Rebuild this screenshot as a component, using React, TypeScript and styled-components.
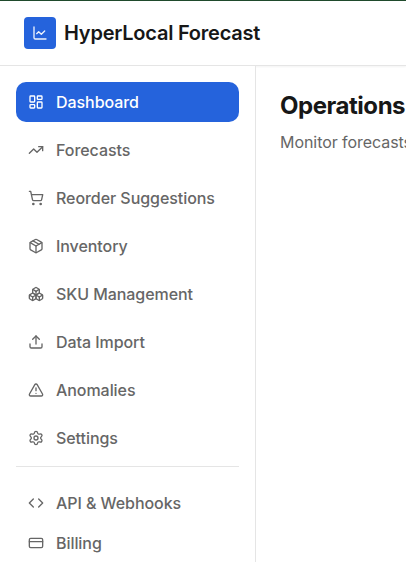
import React from "react";
import styled, { createGlobalStyle } from "styled-components";
import {
  LayoutDashboard, TrendingUp, ShoppingCart, Package, Boxes, Upload,
  TriangleAlert, Settings, Code, CreditCard, ChartLine, type LucideIcon,
} from "lucide-react";

const GlobalStyle = createGlobalStyle`
  *, *::before, *::after { box-sizing: border-box; }
  body { margin: 0; overflow: hidden; background: #fff; font-family: Inter, sans-serif; }
`;

const Page = styled.div`
  display: flex;
  flex-direction: column;
  height: 562px;
  overflow: hidden;
  border-top: 1px solid #1f4a2c;
`;

const Header = styled.header`
  display: flex;
  flex: none;
  align-items: center;
  gap: 8px;
  height: 65px;
  padding: 0 24px;
  border-bottom: 1px solid #e5e5e5;
  box-shadow: 0 1px 2px rgba(0, 0, 0, 0.05);
`;

const Logo = styled.div`
  display: grid;
  place-items: center;
  width: 32px;
  height: 32px;
  border-radius: 4px;
  background: #2563dc;
  color: rgba(255, 255, 255, 0.92);
`;

const Brand = styled.span`
  color: #171717;
  font-size: 20px;
  font-weight: 600;
  line-height: 28px;
  letter-spacing: -0.23px;
  white-space: nowrap;
`;

const Body = styled.div`
  display: flex;
  flex: 1;
  min-height: 0;
`;

const Sidebar = styled.aside`
  flex: none;
  width: 256px;
  padding: 16px;
  border-right: 1px solid #e5e5e5;
  background: #fff;
`;

const Nav = styled.nav<{ $gap: number }>`
  display: flex;
  flex-direction: column;
  gap: ${(p) => p.$gap}px;
`;

const NavItem = styled.a<{ $active?: boolean }>`
  display: flex;
  align-items: center;
  gap: 12px;
  height: 40px;
  padding: 0 12px;
  border-radius: 10px;
  background: ${(p) => (p.$active ? "#2563dc" : "transparent")};
  color: ${(p) => (p.$active ? "#fff" : "#666")};
  font-size: 16px;
  font-weight: 500;
  line-height: 24px;
  letter-spacing: -0.06px;
  white-space: nowrap;
`;

const Divider = styled.hr`
  height: 1px;
  margin: 8px 0 16px;
  border: 0;
  background: #e5e5e5;
`;

const Main = styled.main`
  flex: 1;
  min-width: 0;
  padding: 24px 0 24px 24px;
  white-space: nowrap;
`;

const Title = styled.h1`
  margin: 0;
  color: #171717;
  font-size: 24px;
  font-weight: 700;
  line-height: 32px;
  letter-spacing: -0.46px;
`;

const Subtitle = styled.p`
  margin: 8px 0 0;
  color: #666;
  font-size: 16px;
  line-height: 24px;
  letter-spacing: -0.06px;
`;

type Item = { label: string; Icon: LucideIcon };

const primary: Item[] = [
  { label: "Dashboard", Icon: LayoutDashboard },
  { label: "Forecasts", Icon: TrendingUp },
  { label: "Reorder Suggestions", Icon: ShoppingCart },
  { label: "Inventory", Icon: Package },
  { label: "SKU Management", Icon: Boxes },
  { label: "Data Import", Icon: Upload },
  { label: "Anomalies", Icon: TriangleAlert },
  { label: "Settings", Icon: Settings },
];

const secondary: Item[] = [
  { label: "API & Webhooks", Icon: Code },
  { label: "Billing", Icon: CreditCard },
];

const renderItem = ({ label, Icon }: Item) => (
  <NavItem key={label} $active={label === "Dashboard"}>
    <Icon size={16} />
    {label}
  </NavItem>
);

export default function App() {
  return (
    <Page>
      <GlobalStyle />
      <Header>
        <Logo><ChartLine size={16} /></Logo>
        <Brand>HyperLocal Forecast</Brand>
      </Header>
      <Body>
        <Sidebar>
          <Nav $gap={8}>{primary.map(renderItem)}</Nav>
          <Divider />
          <Nav $gap={0}>{secondary.map(renderItem)}</Nav>
        </Sidebar>
        <Main>
          <Title>Operations</Title>
          <Subtitle>Monitor forecasts</Subtitle>
        </Main>
      </Body>
    </Page>
  );
}
